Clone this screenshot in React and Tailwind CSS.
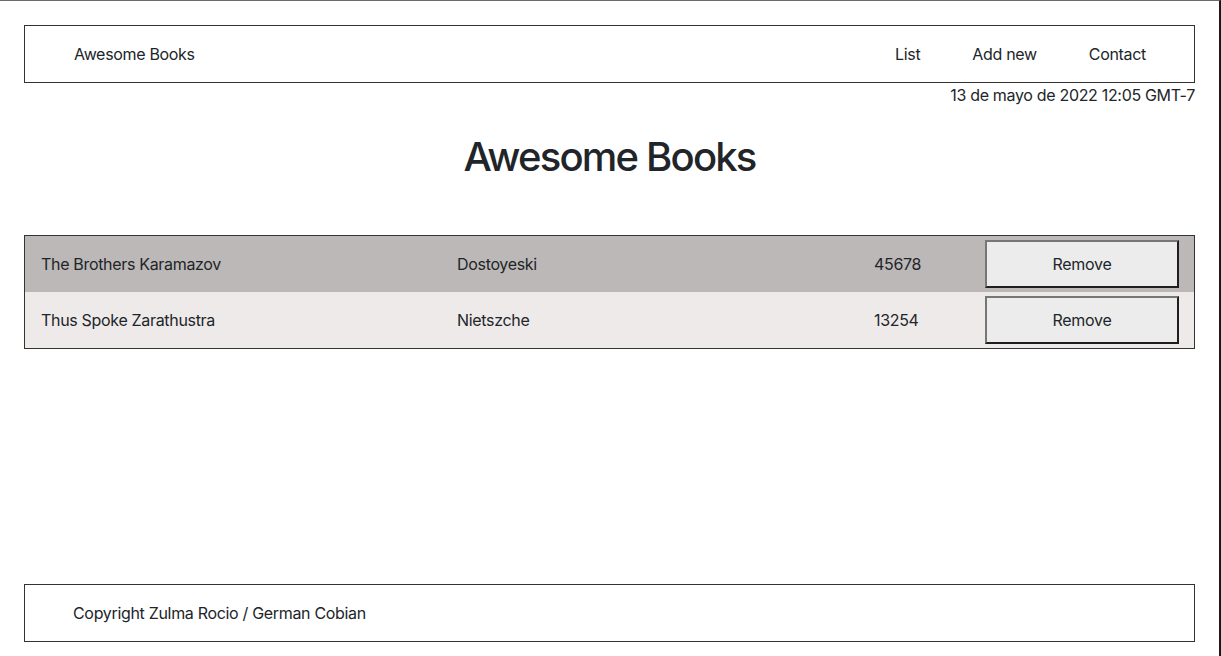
export default function App() {
  const books = [
    { title: "The Brothers Karamazov", author: "Dostoyeski", id: "45678", bg: "bg-[#bcb8b7]" },
    { title: "Thus Spoke Zarathustra", author: "Nietszche", id: "13254", bg: "bg-[#efeaea]" },
  ];
  return (
    <div
      className="h-[656px] w-[1221px] overflow-hidden border-t border-t-[#6b6b6b] border-r-2 border-r-[#1a1a1a] bg-white px-6 pt-6 text-[16px] tracking-[-0.02em] text-[#212529] flex flex-col"
      style={{ fontFamily: 'Inter, "Noto Sans", "Liberation Sans", sans-serif' }}
    >
      <nav className="flex h-[58px] items-center justify-between border border-[#333] pl-[49px] pr-[48px]">
        <span>Awesome Books</span>
        <ul className="flex items-center gap-[52px]">
          <li>List</li>
          <li>Add new</li>
          <li>Contact</li>
        </ul>
      </nav>
      <div className="text-right leading-6">13 de mayo de 2022 12:05 GMT-7</div>
      <h1 className="mt-[26px] text-center text-[40px] font-medium leading-[48px] tracking-[-0.045em]">Awesome Books</h1>
      <div className="mt-[54px] border border-[#333]">
        {books.map((b) => (
          <div key={b.id} className={`grid h-[56px] grid-cols-[416px_417px_111px_1fr] items-center ${b.bg}`}>
            <div className="pl-4">{b.title}</div>
            <div className="pl-4">{b.author}</div>
            <div className="pl-4">{b.id}</div>
            <div className="pl-4 pr-4">
              <button className="flex h-[48px] w-[194px] items-center justify-center border-2 border-t-[#767676] border-l-[#767676] border-b-[#1e1e1e] border-r-[#1e1e1e] bg-[#ececec] text-[16px] tracking-[-0.02em] text-[#212529]">
                Remove
              </button>
            </div>
          </div>
        ))}
      </div>
      <footer className="mt-auto mb-[14px] flex h-[58px] items-center border border-[#333] pl-[48px]">
        Copyright Zulma Rocio / German Cobian
      </footer>
    </div>
  );
}
